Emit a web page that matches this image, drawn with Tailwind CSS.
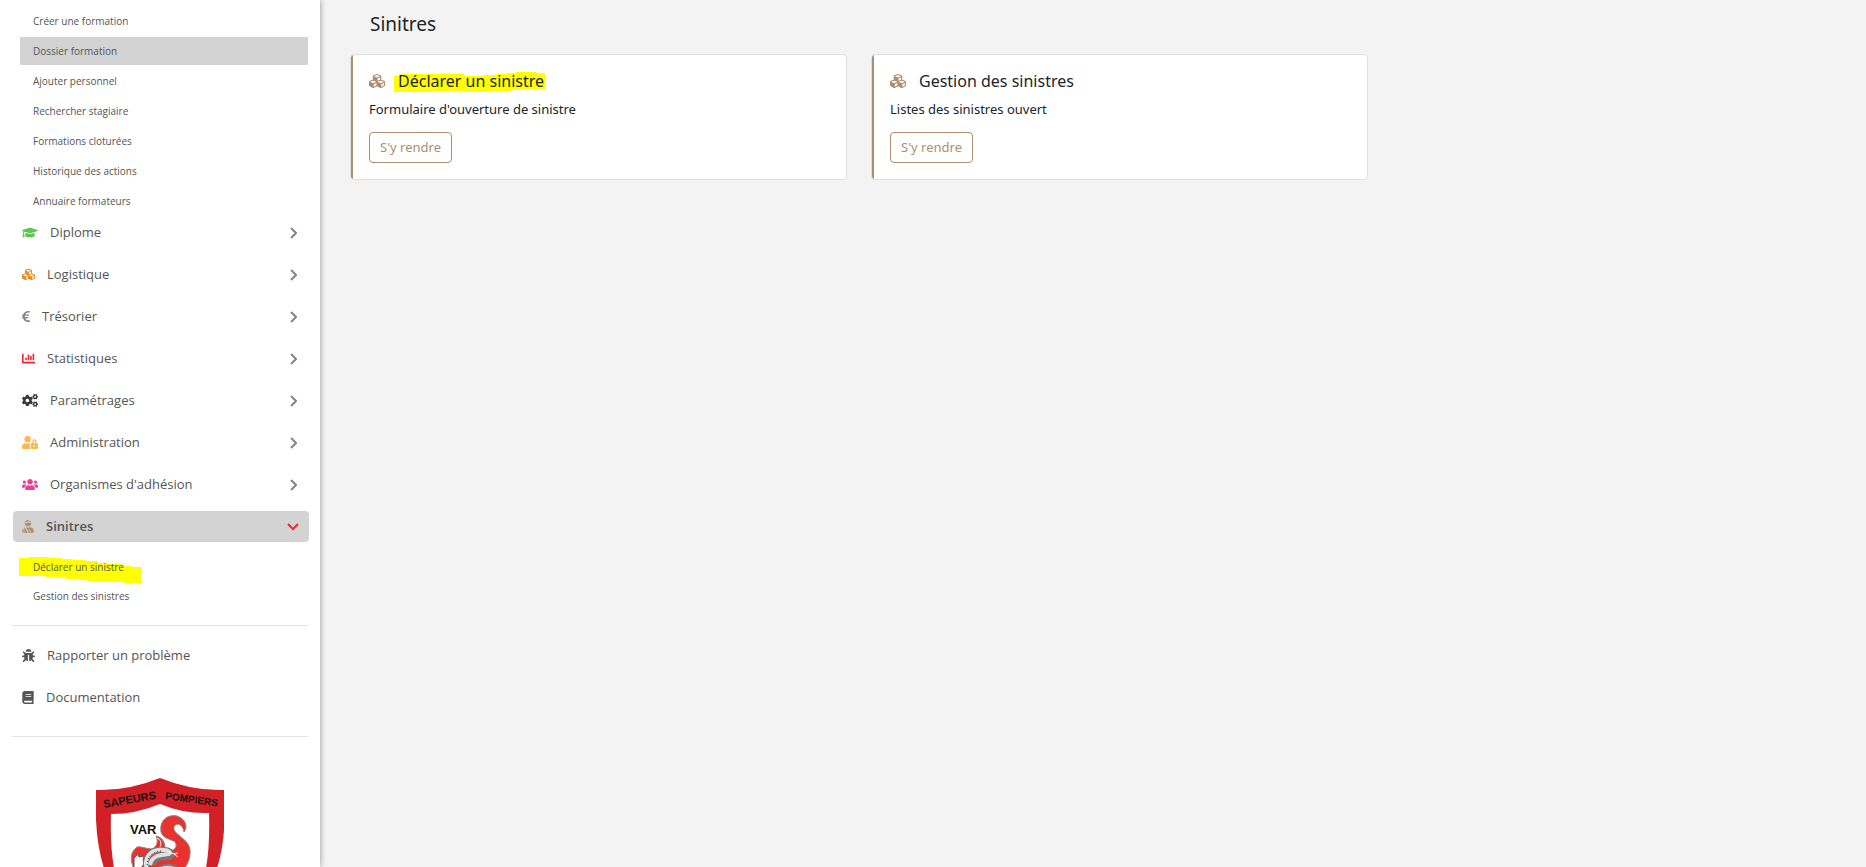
<!DOCTYPE html>
<html lang="fr">
<head>
  <meta charset="UTF-8" />
  <meta name="viewport" content="width=device-width, initial-scale=1.0"/>
  <title>Sinitres</title>
  <script src="https://cdn.jsdelivr.net/npm/@tailwindcss/browser@4"></script>
</head>
<body class="bg-[#f3f3f3] font-['Noto_Sans',sans-serif] text-[#212529]">
  <!-- Icon sprite -->
  <svg class="hidden" xmlns="http://www.w3.org/2000/svg">
    <symbol id="cap" viewBox="0 0 640 512"><path d="M622.34 153.2L343.4 67.5c-15.2-4.67-31.6-4.67-46.79 0L17.66 153.2c-23.54 7.23-23.54 38.36 0 45.59l48.63 14.94c-10.67 13.19-17.23 29.28-17.88 46.9C38.78 266.15 32 276.11 32 288c0 10.78 5.68 19.85 13.86 25.65L20.33 428.53C18.11 438.52 25.71 448 35.94 448h56.11c10.24 0 17.84-9.48 15.62-19.47L82.14 313.65C90.32 307.85 96 298.78 96 288c0-11.57-6.47-21.25-15.66-26.87.76-15.02 8.44-28.3 20.69-36.72L296.6 284.5c9.06 2.78 26.44 6.25 46.79 0l278.95-85.7c23.55-7.24 23.55-38.36 0-45.6zM352.79 315.09c-28.53 8.76-52.84 3.92-65.59 0l-145.02-44.55L128 384c0 35.35 85.96 64 192 64s192-28.65 192-64l-14.18-113.47-145.03 44.56z"/></symbol>
    <symbol id="cubes" viewBox="0 0 512 512"><path d="M488.6 250.2L392 214V105.5c0-15-9.3-28.4-23.4-33.7l-100-37.5c-8.1-3.1-17.1-3.1-25.3 0l-100 37.5c-14.1 5.3-23.4 18.7-23.4 33.7V214l-96.6 36.2C9.3 255.5 0 268.9 0 283.9V394c0 13.6 7.7 26.1 19.9 32.2l100 50c10.1 5.1 22.1 5.1 32.2 0l103.9-52 103.9 52c10.1 5.1 22.1 5.1 32.2 0l100-50c12.2-6.1 19.9-18.6 19.9-32.2V283.9c0-15-9.3-28.4-23.4-33.7zM358 214.8l-85 31.9v-68.2l85-37v73.3zM154 104.1l102-38.2 102 38.2v.6l-102 41.4-102-41.4v-.6zm84 291.1l-85 42.5v-79.1l85-38.8v75.4zm0-112l-102 41.4-102-41.4v-.6l102-38.2 102 38.2v.6zm240 112l-85 42.5v-79.1l85-38.8v75.4zm0-112l-102 41.4-102-41.4v-.6l102-38.2 102 38.2v.6z"/></symbol>
    <symbol id="euro" viewBox="0 0 320 512"><path d="M310.706 413.765c-1.314-6.63-7.835-10.872-14.424-9.369-10.692 2.439-27.422 5.413-45.426 5.413-56.763 0-101.929-34.79-121.461-85.449h113.689a12 12 0 0 0 11.708-9.369l6.373-28.36c1.686-7.502-4.019-14.631-11.708-14.631H115.22c-1.21-14.328-1.414-28.287.137-42.245H261.95a12 12 0 0 0 11.723-9.434l6.512-29.755c1.638-7.484-4.061-14.566-11.723-14.566H130.184c20.633-44.991 62.69-75.03 117.619-75.03 14.486 0 28.564 2.25 37.851 4.145 6.216 1.268 12.347-2.498 14.002-8.623l11.991-44.368c1.822-6.741-2.465-13.616-9.326-14.917C290.217 34.912 270.71 32 249.635 32 152.451 32 74.03 92.252 45.075 176H12c-6.627 0-12 5.373-12 12v29.755c0 6.627 5.373 12 12 12h21.569c-1.009 13.607-1.181 29.287-.181 42.245H12c-6.627 0-12 5.373-12 12v28.36c0 6.627 5.373 12 12 12h30.114C67.139 414.692 145.264 480 249.635 480c26.301 0 48.562-4.544 61.101-7.788 6.167-1.595 10.027-7.708 8.788-13.957l-8.818-44.49z"/></symbol>
    <symbol id="chart" viewBox="0 0 512 512"><path d="M332.8 320h38.4c6.4 0 12.8-6.4 12.8-12.8V172.8c0-6.4-6.4-12.8-12.8-12.8h-38.4c-6.4 0-12.8 6.4-12.8 12.8v134.4c0 6.4 6.4 12.8 12.8 12.8zm96 0h38.4c6.4 0 12.8-6.4 12.8-12.8V76.8c0-6.4-6.4-12.8-12.8-12.8h-38.4c-6.4 0-12.8 6.4-12.8 12.8v230.4c0 6.4 6.4 12.8 12.8 12.8zm-288 0h38.4c6.4 0 12.8-6.4 12.8-12.8v-70.4c0-6.4-6.4-12.8-12.8-12.8h-38.4c-6.4 0-12.8 6.4-12.8 12.8v70.4c0 6.4 6.4 12.8 12.8 12.8zm96 0h38.4c6.4 0 12.8-6.4 12.8-12.8V108.8c0-6.4-6.4-12.8-12.8-12.8h-38.4c-6.4 0-12.8 6.4-12.8 12.8v198.4c0 6.4 6.4 12.8 12.8 12.8zM496 384H64V80c0-8.84-7.16-16-16-16H16C7.16 64 0 71.16 0 80v336c0 17.67 14.33 32 32 32h464c8.84 0 16-7.16 16-16v-32c0-8.84-7.16-16-16-16z"/></symbol>
    <symbol id="cogs" viewBox="0 0 640 512">
      <path id="smallCog" d="M512.1 191l-8.2 14.3c-3 5.3-9.4 7.5-15.1 5.4-11.8-4.4-22.6-10.7-32.1-18.6-4.6-3.8-5.8-10.5-2.8-15.7l8.2-14.3c-6.9-8-12.3-17.3-15.9-27.4h-16.5c-6 0-11.2-4.3-12.2-10.3-2-12-2.1-24.6 0-37.1 1-6 6.2-10.4 12.2-10.4h16.5c3.6-10.1 9-19.4 15.9-27.4l-8.2-14.3c-3-5.2-1.9-11.9 2.8-15.7 9.5-7.9 20.4-14.2 32.1-18.6 5.7-2.1 12.1.1 15.1 5.4l8.2 14.3c10.5-1.9 21.2-1.9 31.7 0L552 6.3c3-5.3 9.4-7.5 15.1-5.4 11.8 4.4 22.6 10.7 32.1 18.6 4.6 3.8 5.8 10.5 2.8 15.7l-8.2 14.3c6.9 8 12.3 17.3 15.9 27.4h16.5c6 0 11.2 4.3 12.2 10.3 2 12 2.1 24.6 0 37.1-1 6-6.2 10.4-12.2 10.4h-16.5c-3.6 10.1-9 19.4-15.9 27.4l8.2 14.3c3 5.2 1.9 11.9-2.8 15.7-9.5 7.9-20.4 14.2-32.1 18.6-5.7 2.1-12.1-.1-15.1-5.4l-8.2-14.3c-10.4 1.9-21.2 1.9-31.7 0zm-10.5-58.8c38.5 29.6 82.4-14.3 52.8-52.8-38.5-29.7-82.4 14.3-52.8 52.8z"/>
      <use href="#smallCog" y="299"/>
      <path d="M386.3 286.1l33.7 16.8c10.1 5.8 14.5 18.1 10.5 29.1-8.9 24.2-26.4 46.4-42.6 65.8-7.4 8.9-20.2 11.1-30.3 5.3l-29.1-16.8c-16 13.7-34.6 24.6-54.9 31.7v33.6c0 11.6-8.3 21.6-19.7 23.6-24.6 4.2-50.4 4.4-75.9 0-11.5-2-20-11.9-20-23.6V418c-20.3-7.2-38.9-18-54.9-31.7L74 403c-10 5.8-22.9 3.6-30.3-5.3-16.2-19.4-33.3-41.6-42.2-65.7-4-10.9.4-23.2 10.5-29.1l33.3-16.8c-3.9-20.9-3.9-42.4 0-63.4L12 205.8c-10.1-5.8-14.6-18.1-10.5-29 8.9-24.2 26-46.4 42.2-65.8 7.4-8.9 20.2-11.1 30.3-5.3l29.1 16.8c16-13.7 34.6-24.6 54.9-31.7V57.1c0-11.5 8.2-21.5 19.6-23.5 24.6-4.2 50.5-4.4 76-.1 11.5 2 20 11.9 20 23.6v33.6c20.3 7.2 38.9 18 54.9 31.7l29.1-16.8c10-5.8 22.9-3.6 30.3 5.3 16.2 19.4 33.2 41.6 42.1 65.8 4 10.9.1 23.2-10 29.1l-33.7 16.8c3.9 21 3.9 42.5 0 63.5zm-117.6 21.1c59.2-77-28.7-164.9-105.7-105.7-59.2 77 28.7 164.9 105.7 105.7z"/>
    </symbol>
    <symbol id="userLock" viewBox="0 0 640 512"><path d="M224 256A128 128 0 1 0 96 128a128 128 0 0 0 128 128zm96 64a63.08 63.08 0 0 1 8.1-30.5c-4.8-.5-9.5-1.5-14.5-1.5h-16.7a174.08 174.08 0 0 1-145.8 0h-16.7A134.43 134.43 0 0 0 0 422.4V464a48 48 0 0 0 48 48h280.9a63.54 63.54 0 0 1-8.9-32zm288-32h-32v-80a80 80 0 0 0-160 0v80h-32a32 32 0 0 0-32 32v160a32 32 0 0 0 32 32h224a32 32 0 0 0 32-32V320a32 32 0 0 0-32-32zM496 432a32 32 0 1 1 32-32 32 32 0 0 1-32 32zm32-144h-64v-80a32 32 0 0 1 64 0z"/></symbol>
    <symbol id="users" viewBox="0 0 640 512"><path d="M96 224c35.3 0 64-28.7 64-64s-28.7-64-64-64-64 28.7-64 64 28.7 64 64 64zm448 0c35.3 0 64-28.7 64-64s-28.7-64-64-64-64 28.7-64 64 28.7 64 64 64zm32 32h-64c-17.6 0-33.5 7.1-45.1 18.6 40.3 22.1 68.9 62 75.1 109.4h66c17.7 0 32-14.3 32-32v-32c0-35.3-28.7-64-64-64zm-256 0c61.9 0 112-50.1 112-112S381.9 32 320 32 208 82.1 208 144s50.1 112 112 112zm76.8 32h-8.3c-20.8 10-43.9 16-68.5 16s-47.6-6-68.5-16h-8.3C179.6 288 128 339.6 128 403.2V432c0 26.5 21.5 48 48 48h288c26.5 0 48-21.5 48-48v-28.8c0-63.6-51.6-115.2-115.2-115.2zm-223.7-13.4C161.5 263.1 145.6 256 128 256H64c-35.3 0-64 28.7-64 64v32c0 17.7 14.3 32 32 32h65.9c6.3-47.4 34.9-87.3 75.2-109.4z"/></symbol>
    <symbol id="injured" viewBox="0 0 448 512"><path d="M277.37 11.98C261.08 4.47 243.11 0 224 0c-53.69 0-99.5 33.13-118.51 80h81.19l90.69-68.02zM342.51 80c-7.9-19.47-20.67-36.2-36.49-49.52L239.99 80h102.52zM224 256c70.69 0 128-57.31 128-128 0-5.48-.95-10.7-1.61-16H97.61c-.67 5.3-1.61 10.52-1.61 16 0 70.69 57.31 128 128 128zM80 299.7V512h128.26l-98.45-221.52A132.835 132.835 0 0 0 80 299.7zM0 464c0 26.51 21.49 48 48 48V320.24C18.88 344.89 0 381.26 0 422.4V464zm256-48h-55.38l42.67 96H256c26.47 0 48-21.53 48-48s-21.53-48-48-48zm57.6-128h-16.71c-22.24 10.18-46.88 16-72.89 16s-50.65-5.82-72.89-16h-7.37l42.67 96H256c44.11 0 80 35.89 80 80 0 18.08-6.26 34.59-16.41 48H400c26.51 0 48-21.49 48-48v-41.6c0-74.23-60.17-134.4-134.4-134.4z"/></symbol>
    <symbol id="bug" viewBox="0 0 512 512"><path d="M511.988 288.9c-.478 17.43-15.217 31.1-32.653 31.1H424v16c0 21.864-4.882 42.584-13.6 61.145l60.228 60.228c12.496 12.497 12.496 32.758 0 45.255-12.498 12.497-32.759 12.496-45.256 0l-54.736-54.736C345.886 467.965 314.351 480 280 480V236c0-6.627-5.373-12-12-12h-24c-6.627 0-12 5.373-12 12v244c-34.351 0-65.886-12.035-90.636-32.108l-54.736 54.736c-12.498 12.497-32.759 12.496-45.256 0-12.496-12.497-12.496-32.758 0-45.255l60.228-60.228C92.882 378.584 88 357.864 88 336v-16H32.666C15.23 320 .491 306.33.013 288.9-.484 270.816 14.028 256 32 256h56v-58.745l-46.628-46.628c-12.496-12.497-12.496-32.758 0-45.255 12.498-12.497 32.758-12.497 45.256 0L141.255 160h229.489l54.627-54.627c12.498-12.497 32.758-12.497 45.256 0 12.496 12.497 12.496 32.758 0 45.255L424 197.255V256h56c17.972 0 32.484 14.816 31.988 32.9zM257 0c-61.856 0-112 50.144-112 112h224C369 50.144 318.856 0 257 0z"/></symbol>
    <symbol id="book" viewBox="0 0 448 512"><path d="M448 360V24c0-13.3-10.7-24-24-24H96C43 0 0 43 0 96v320c0 53 43 96 96 96h328c13.3 0 24-10.7 24-24v-16c0-7.5-3.5-14.3-8.9-18.7-4.2-15.4-4.2-59.3 0-74.7 5.4-4.3 8.9-11.1 8.9-18.6zM128 134c0-3.3 2.7-6 6-6h212c3.3 0 6 2.7 6 6v20c0 3.3-2.7 6-6 6H134c-3.3 0-6-2.7-6-6v-20zm0 64c0-3.3 2.7-6 6-6h212c3.3 0 6 2.7 6 6v20c0 3.3-2.7 6-6 6H134c-3.3 0-6-2.7-6-6v-20zm253.4 250H96c-17.7 0-32-14.3-32-32 0-17.6 14.4-32 32-32h285.4c-1.9 17.1-1.9 46.9 0 64z"/></symbol>
    <symbol id="chevron" viewBox="0 0 7 12"><path d="M1 1l5 5-5 5" fill="none" stroke="currentColor" stroke-width="2"/></symbol>
    <symbol id="chevronDown" viewBox="0 0 12 8"><path d="M1 1l5 5 5-5" fill="none" stroke="currentColor" stroke-width="2"/></symbol>
  </svg>

  <div class="flex h-screen overflow-hidden">
    <!-- Sidebar -->
    <aside class="w-80 shrink-0 overflow-hidden bg-white pt-[7px] pr-3 pl-3 font-['Open_Sans',sans-serif] text-[13px] text-[#555] shadow-[0_0_6px_rgba(0,0,0,0.4)]">
      <nav>
        <ul class="flex flex-col gap-[2px] pl-2 text-[10px] leading-7">
          <li><a href="#" class="block pl-[13px]">Créer une formation</a></li>
          <li><a href="#" class="block bg-[#d3d3d3] pl-[13px]">Dossier formation</a></li>
          <li><a href="#" class="block pl-[13px]">Ajouter personnel</a></li>
          <li><a href="#" class="block pl-[13px]">Rechercher stagiaire</a></li>
          <li><a href="#" class="block pl-[13px]">Formations cloturées</a></li>
          <li><a href="#" class="block pl-[13px]">Historique des actions</a></li>
          <li><a href="#" class="block pl-[13px]">Annuaire formateurs</a></li>
        </ul>

        <div class="-mr-px ml-px flex flex-col gap-[11px] pt-[2px]">
          <button class="flex h-[31px] items-center gap-3 pr-3 pl-[9px]">
            <svg class="h-[13px] w-4 fill-[#5cc654]"><use href="#cap"/></svg>
            <span>Diplome</span>
            <svg class="ml-auto h-3 w-[7px] text-[#858585]"><use href="#chevron"/></svg>
          </button>
          <button class="flex h-[31px] items-center gap-3 pr-3 pl-[9px]">
            <svg class="size-[13px] fill-[#ea8a1f]"><use href="#cubes"/></svg>
            <span>Logistique</span>
            <svg class="ml-auto h-3 w-[7px] text-[#858585]"><use href="#chevron"/></svg>
          </button>
          <button class="flex h-[31px] items-center gap-3 pr-3 pl-[9px]">
            <svg class="h-[13px] w-2 fill-[#858585]"><use href="#euro"/></svg>
            <span>Trésorier</span>
            <svg class="ml-auto h-3 w-[7px] text-[#858585]"><use href="#chevron"/></svg>
          </button>
          <button class="flex h-[31px] items-center gap-3 pr-3 pl-[9px]">
            <svg class="size-[13px] fill-[#f02730]"><use href="#chart"/></svg>
            <span>Statistiques</span>
            <svg class="ml-auto h-3 w-[7px] text-[#858585]"><use href="#chevron"/></svg>
          </button>
          <button class="flex h-[31px] items-center gap-3 pr-3 pl-[9px]">
            <svg class="h-[13px] w-4 fill-[#343a40]"><use href="#cogs"/></svg>
            <span>Paramétrages</span>
            <svg class="ml-auto h-3 w-[7px] text-[#858585]"><use href="#chevron"/></svg>
          </button>
          <button class="flex h-[31px] items-center gap-3 pr-3 pl-[9px]">
            <svg class="h-[13px] w-4 fill-[#fdb94b]"><use href="#userLock"/></svg>
            <span>Administration</span>
            <svg class="ml-auto h-3 w-[7px] text-[#858585]"><use href="#chevron"/></svg>
          </button>
          <button class="flex h-[31px] items-center gap-3 pr-3 pl-[9px]">
            <svg class="h-[13px] w-4 fill-[#f03a96]"><use href="#users"/></svg>
            <span>Organismes d'adhésion</span>
            <svg class="ml-auto h-3 w-[7px] text-[#858585]"><use href="#chevron"/></svg>
          </button>
          <button class="flex h-[31px] items-center gap-3 rounded bg-[#d3d3d3] pr-[10px] pl-[9px] font-semibold">
            <svg class="h-[13px] w-3 fill-[#ae8e71]"><use href="#injured"/></svg>
            <span>Sinitres</span>
            <svg class="ml-auto h-2 w-3 text-[#f02730]"><use href="#chevronDown"/></svg>
          </button>
        </div>

        <ul class="mt-[11px] flex flex-col gap-px pl-2 text-[10px] leading-7">
          <li class="relative">
            <!-- marker stroke -->
            <svg class="absolute top-1 -left-px h-[27px] w-[122px] fill-[#ffff00]" viewBox="0 0 122 27"><path d="M0 1h10V0h20v1h13v1h11v1h13v1h12v2h10v1h13v2h11v1h9v16h-17v-1H76v-1h-7v-1H58v-1H47v-1H37v-1H27v-1H0z"/></svg>
            <a href="#" class="relative block pl-[13px]">Déclarer un sinistre</a>
          </li>
          <li><a href="#" class="block pl-[13px]">Gestion des sinistres</a></li>
        </ul>
      </nav>

      <hr class="mt-[15px] mb-[14px] border-[#e4e4e4]">
      <div class="flex flex-col gap-[11px]">
        <a href="#" class="flex h-[31px] items-center gap-3 pl-[10px]">
          <svg class="size-[13px] fill-[#555]"><use href="#bug"/></svg>
          Rapporter un problème
        </a>
        <a href="#" class="flex h-[31px] items-center gap-3 pl-[10px]">
          <svg class="h-[13px] w-3 fill-[#555]"><use href="#book"/></svg>
          Documentation
        </a>
      </div>
      <hr class="mt-[23px] mb-[41px] border-[#e4e4e4]">

      <!-- Logo -->
      <svg class="mx-auto h-[150px] w-32" viewBox="0 0 128 150">
        <path d="M64 0Q96 13 128 12Q131 60 121 90Q108 128 64 150Q20 128 8 90Q-2 60 0 12Q32 13 64 0z" fill="#d22027"/>
        <path d="M64 26Q88 36 113 35Q114 68 110 90Q98 122 64 138Q30 122 18 90Q14 68 15 36Q40 36 64 26z" fill="#fff"/>
        <g font-family="'Liberation Sans Narrow','Liberation Sans',sans-serif" font-weight="700" fill="#111">
          <text x="8" y="30" font-size="11" transform="rotate(-10 8 30)">SAPEURS</text>
          <text x="69" y="21" font-size="10" transform="rotate(8 69 21)">POMPIERS</text>
          <text x="34" y="56" font-size="13">VAR</text>
        </g>
        <!-- flames -->
        <path d="M65 54C63 42 72 36 81 38C90 41 92 49 88 54C87 46 80 44 78 49C76 56 92 60 94 71C95 82 90 90 84 95H40C34 84 33 75 41 69C45 68 50 71 56 71C60 69 63 65 60 58C66 59 69 64 69 70C75 76 83 70 79 64C75 61 67 61 65 54z" fill="#e8322f" stroke="#8b8b8b" stroke-width="1"/>
        <path d="M61 60C66 62 66 68 62 71" fill="none" stroke="#fff" stroke-width="1"/>
        <path d="M38 80l4-4 1 3 5-1-1 5 3 3-4 2 1 5-6-3-3 2z" fill="#fff" stroke="#555" stroke-width="1"/>
        <!-- salamander -->
        <path d="M52 94C46 80 55 70 68 72C74 72 78 76 74 79C66 79 57 79 57 87" fill="none" stroke="#777" stroke-width="6"/>
        <path d="M52 94C46 80 55 70 68 72C73 72 75 75 73 76C64 77 56 77 54 87" fill="none" stroke="#e2e2e2" stroke-width="4"/>
        <path d="M52 90C49 80 56 73 66 73" fill="none" stroke="#333" stroke-width="1" stroke-dasharray="1 2"/>
        <path d="M73 74l5 2 4-1M78 76l4 3" fill="none" stroke="#fff" stroke-width="1"/>
        <path d="M59 93C66 84 80 85 86 94" fill="#ddd" stroke="#777" stroke-width="2"/>
      </svg>
    </aside>

    <!-- Main content -->
    <main class="min-w-0 flex-1 pt-[10px] pr-8 pl-[30px]">
      <h1 class="pl-5 text-[19px] leading-7">Sinitres</h1>
      <div class="mt-4 grid max-w-[1018px] grid-cols-2 gap-6 text-[13px]">
        <section class="overflow-hidden rounded border border-[#dfdfdf] bg-white">
          <div class="border-l-2 border-[#ae8e71] px-4 pt-[14px] pb-4">
            <div class="flex items-center gap-[13px]">
              <svg class="size-4 fill-[#ae8e71]"><use href="#cubes"/></svg>
              <h2 class="relative text-[16px] leading-6">
                <!-- marker stroke -->
                <svg class="absolute top-[3px] -left-1 h-[20px] w-[151px] fill-[#ffff00]" viewBox="0 0 151 20"><path d="M0 4h7V2h63v2h19V3h13V2h11V1h9V0h20v1h9v16h-23v1h-11v1H91v1H71v-1H39v1H0z"/></svg>
                <span class="relative">Déclarer un sinistre</span>
              </h2>
            </div>
            <p class="mt-[6px] leading-5">Formulaire d'ouverture de sinistre</p>
            <button class="mt-[13px] h-[31px] rounded border border-[#ae8e71] px-[10px] text-[#ae8e71]">S'y rendre</button>
          </div>
        </section>
        <section class="overflow-hidden rounded border border-[#dfdfdf] bg-white">
          <div class="border-l-2 border-[#ae8e71] px-4 pt-[14px] pb-4">
            <div class="flex items-center gap-[13px]">
              <svg class="size-4 fill-[#ae8e71]"><use href="#cubes"/></svg>
              <h2 class="text-[16px] leading-6">Gestion des sinistres</h2>
            </div>
            <p class="mt-[6px] leading-5">Listes des sinistres ouvert</p>
            <button class="mt-[13px] h-[31px] rounded border border-[#ae8e71] px-[10px] text-[#ae8e71]">S'y rendre</button>
          </div>
        </section>
      </div>
    </main>
  </div>
</body>
</html>
